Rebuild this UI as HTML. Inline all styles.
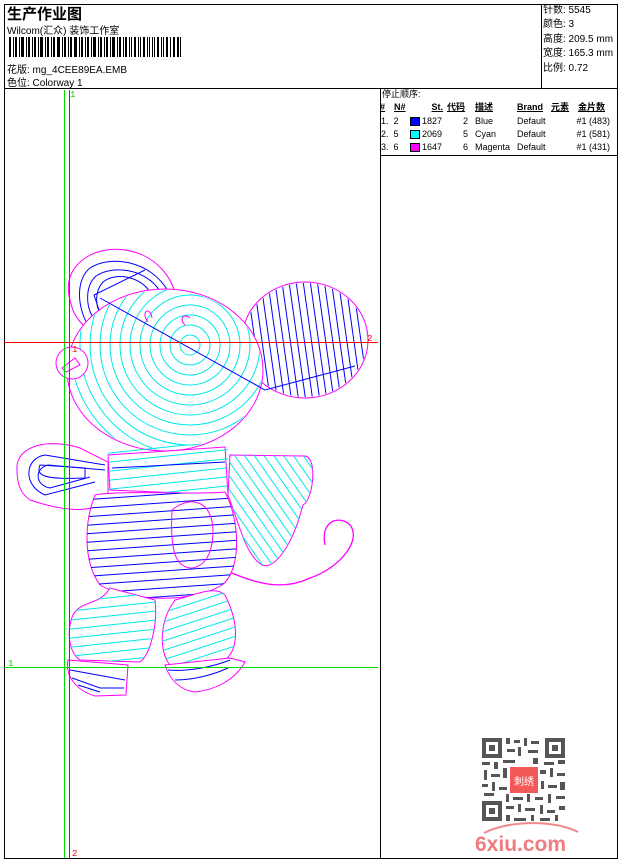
<!DOCTYPE html>
<html><head><meta charset="utf-8"><style>
body{margin:0;width:620px;height:860px;background:#fff;position:relative;overflow:hidden;font-family:"Liberation Sans","Noto Sans CJK SC",sans-serif;color:#000}
.a{position:absolute;white-space:nowrap}
.s{font-size:10px}
.t{position:absolute;font-size:9px;line-height:11px;white-space:nowrap}
.r{text-align:right}
.b{font-weight:bold;text-decoration:underline}
.sw{position:absolute;width:10px;height:9px;border:1px solid #000;box-sizing:border-box}
</style></head><body>
<svg class="a" style="left:0;top:0" width="620" height="860">
<defs>
<pattern id="hb" width="10" height="8.5" patternUnits="userSpaceOnUse" patternTransform="rotate(-4)"><line x1="0" y1="3" x2="10" y2="3" stroke="#0000ff" stroke-width="1"/></pattern>
<pattern id="hc" width="10" height="9" patternUnits="userSpaceOnUse" patternTransform="rotate(-6)"><line x1="0" y1="3" x2="10" y2="3" stroke="#00e8e8" stroke-width="1"/></pattern>
<pattern id="hc2" width="10" height="9" patternUnits="userSpaceOnUse" patternTransform="rotate(-18)"><line x1="0" y1="3" x2="10" y2="3" stroke="#00e8e8" stroke-width="1"/></pattern>
<pattern id="dc" width="8" height="10" patternUnits="userSpaceOnUse" patternTransform="rotate(-35)"><line x1="3" y1="0" x2="3" y2="10" stroke="#00e8e8" stroke-width="1"/></pattern>
<pattern id="vb" width="7" height="10" patternUnits="userSpaceOnUse" patternTransform="rotate(-8)"><line x1="2" y1="0" x2="2" y2="10" stroke="#0000ff" stroke-width="1"/></pattern>
<clipPath id="head"><ellipse cx="165" cy="370" rx="97" ry="80"/></clipPath>
<clipPath id="ear"><ellipse cx="305" cy="340" rx="62" ry="57"/></clipPath>
</defs>
<rect x="4.5" y="4.5" width="613" height="854" fill="none" stroke="#000"/>
<line x1="4" y1="88.5" x2="618" y2="88.5" stroke="#000"/>
<line x1="541.5" y1="4" x2="541.5" y2="88" stroke="#000"/>
<line x1="380.5" y1="88" x2="380.5" y2="858" stroke="#000"/>
<line x1="380" y1="155.5" x2="618" y2="155.5" stroke="#000"/>
<!-- left ear -->
<path d="M70,300 C60,265 95,245 125,250 C160,255 178,285 176,306 L120,330 C95,340 75,325 70,300Z" fill="#fff" stroke="#ff00ff"/>
<g fill="none" stroke="#0000ff"><path d="M168,291 C150,260 110,255 90,268 C75,280 77,310 90,328"/><path d="M160,291 C145,268 112,265 96,276 C84,287 86,310 95,320"/><path d="M150,292 C140,276 115,272 103,282 C94,292 96,306 100,313"/><path d="M145,270 L94,295 L100,313"/></g>
<!-- right ear -->
<ellipse cx="305" cy="340" rx="63" ry="58" fill="#fff" stroke="#ff00ff"/>
<rect x="240" y="280" width="130" height="120" fill="url(#vb)" clip-path="url(#ear)"/>
<!-- head -->
<ellipse cx="165" cy="370" rx="98" ry="81" fill="#fff" stroke="#ff00ff"/>
<g clip-path="url(#head)" fill="none" stroke="#00e8e8">
<circle cx="190" cy="345" r="10"/><circle cx="190" cy="345" r="20"/><circle cx="190" cy="345" r="30"/><circle cx="190" cy="345" r="40"/><circle cx="190" cy="345" r="50"/><circle cx="190" cy="345" r="60"/><circle cx="190" cy="345" r="70"/><circle cx="190" cy="345" r="80"/><circle cx="190" cy="345" r="90"/><circle cx="190" cy="345" r="100"/><circle cx="190" cy="345" r="110"/><circle cx="190" cy="345" r="120"/>
</g>
<path d="M100,298 L265,390 L355,366" fill="none" stroke="#0000ff"/>
<path d="M148,322 C140,312 150,305 152,318 M185,325 C178,318 185,313 190,318" fill="none" stroke="#ff00ff"/>
<circle cx="72" cy="363" r="16" fill="#fff" stroke="#ff00ff"/>
<path d="M62,368 L75,358 L80,365 L66,372Z" fill="none" stroke="#ff00ff"/>
<!-- collar -->
<path d="M108,455 L225,447 L228,495 L110,490Z" fill="#fff" stroke="#ff00ff"/>
<rect x="108" y="445" width="120" height="50" fill="url(#hc)"/>
<line x1="112" y1="468" x2="225" y2="462" stroke="#0000ff"/>
<!-- left hand -->
<path d="M17,470 C15,445 50,438 80,448 L108,462 L108,500 C90,515 60,510 30,500 C20,493 17,483 17,470Z" fill="#fff" stroke="#ff00ff"/>
<g fill="none" stroke="#0000ff"><path d="M105,465 L45,455 C25,458 22,485 45,495 L95,482"/><path d="M105,470 L48,465 C35,468 34,485 50,488 L90,477"/><path d="M85,468 L40,465 C36,475 42,480 85,478Z"/></g>
<!-- scarf -->
<path d="M230,455 L305,456 C318,458 313,500 303,505 L298,522 C290,545 275,570 262,565 C245,555 238,520 228,495Z" fill="#fff" stroke="#ff00ff"/>
<path d="M230,455 L305,456 C318,458 313,500 303,505 L298,522 C290,545 275,570 262,565 C245,555 238,520 228,495Z" fill="url(#dc)"/>
<!-- body -->
<path d="M95,495 C120,490 200,495 225,492 C240,520 242,570 222,585 C190,605 125,600 100,585 C82,560 85,520 95,495Z" fill="#fff" stroke="#ff00ff"/>
<path d="M95,495 C120,490 200,495 225,492 C240,520 242,570 222,585 C190,605 125,600 100,585 C82,560 85,520 95,495Z" fill="url(#hb)"/>
<path d="M172,510 C190,495 212,500 213,530 C213,560 200,568 190,568 C175,566 170,550 172,510Z" fill="none" stroke="#ff00ff"/>
<!-- tail -->
<path d="M232,573 C260,585 285,590 310,578 C340,568 362,540 350,525 C340,515 320,520 325,545" fill="none" stroke="#ff00ff" stroke-width="1.3"/>
<!-- legs -->
<path d="M110,588 L155,600 C158,625 150,655 140,662 L80,660 C65,650 68,620 75,612 C85,600 100,605 110,588Z" fill="#fff" stroke="#ff00ff"/>
<path d="M110,588 L155,600 C158,625 150,655 140,662 L80,660 C65,650 68,620 75,612 C85,600 100,605 110,588Z" fill="url(#hc)"/>
<path d="M175,600 C195,595 215,585 225,595 C240,625 238,650 225,660 L170,665 C158,650 160,620 175,600Z" fill="#fff" stroke="#ff00ff"/>
<path d="M175,600 C195,595 215,585 225,595 C240,625 238,650 225,660 L170,665 C158,650 160,620 175,600Z" fill="url(#hc2)"/>
<!-- feet -->
<path d="M68,660 L128,665 L126,695 L95,696 C75,690 65,675 68,660Z" fill="#fff" stroke="#ff00ff"/>
<g stroke="#0000ff" fill="none"><path d="M70,670 L125,680"/><path d="M72,678 L100,688 L124,688"/><path d="M78,685 L100,692"/></g>
<path d="M165,665 L230,658 L245,662 C235,680 215,690 195,692 C180,690 170,680 165,665Z" fill="#fff" stroke="#ff00ff"/>
<g stroke="#0000ff" fill="none"><path d="M168,670 C190,672 215,666 230,660"/><path d="M175,680 C195,680 215,674 228,668"/></g>
<!-- guides -->
<line x1="64.5" y1="90" x2="64.5" y2="858" stroke="#00dd00"/>
<line x1="69.5" y1="90" x2="69.5" y2="858" stroke="#ff0000"/>
<line x1="4" y1="342.5" x2="378" y2="342.5" stroke="#ff0000"/>
<line x1="4" y1="667.5" x2="378" y2="667.5" stroke="#00dd00"/>
<text x="70" y="97" font-size="9" fill="#00cc00" font-family="Liberation Mono">1</text>
<text x="367" y="341" font-size="9" fill="#ff0000" font-family="Liberation Mono">2</text>
<text x="72" y="352" font-size="9" fill="#ff0000" font-family="Liberation Mono">1</text>
<text x="8" y="666" font-size="9" fill="#00cc00" font-family="Liberation Mono">1</text>
<text x="72" y="856" font-size="9" fill="#ff0000" font-family="Liberation Mono">2</text>
<!-- barcode -->
<g fill="#000">
<rect x="9" y="37" width="2" height="20"/><rect x="13" y="37" width="1" height="20"/><rect x="15" y="37" width="2" height="20"/><rect x="19" y="37" width="1" height="20"/><rect x="21" y="37" width="3" height="20"/><rect x="26" y="37" width="1" height="20"/><rect x="28" y="37" width="2" height="20"/><rect x="32" y="37" width="1" height="20"/><rect x="34" y="37" width="2" height="20"/><rect x="38" y="37" width="1" height="20"/><rect x="40" y="37" width="3" height="20"/><rect x="45" y="37" width="1" height="20"/><rect x="47" y="37" width="2" height="20"/><rect x="51" y="37" width="1" height="20"/><rect x="53" y="37" width="2" height="20"/><rect x="57" y="37" width="3" height="20"/><rect x="62" y="37" width="1" height="20"/><rect x="64" y="37" width="2" height="20"/><rect x="68" y="37" width="1" height="20"/><rect x="70" y="37" width="2" height="20"/><rect x="74" y="37" width="3" height="20"/><rect x="79" y="37" width="1" height="20"/><rect x="81" y="37" width="2" height="20"/><rect x="85" y="37" width="1" height="20"/><rect x="87" y="37" width="2" height="20"/><rect x="91" y="37" width="1" height="20"/><rect x="93" y="37" width="3" height="20"/><rect x="98" y="37" width="1" height="20"/><rect x="100" y="37" width="2" height="20"/><rect x="104" y="37" width="1" height="20"/><rect x="106" y="37" width="2" height="20"/><rect x="110" y="37" width="1" height="20"/><rect x="112" y="37" width="3" height="20"/><rect x="117" y="37" width="1" height="20"/><rect x="119" y="37" width="2" height="20"/><rect x="123" y="37" width="1" height="20"/><rect x="125" y="37" width="2" height="20"/><rect x="129" y="37" width="1" height="20"/><rect x="131" y="37" width="1" height="20"/><rect x="134" y="37" width="2" height="20"/><rect x="138" y="37" width="1" height="20"/><rect x="140" y="37" width="1" height="20"/><rect x="143" y="37" width="2" height="20"/><rect x="147" y="37" width="1" height="20"/><rect x="149" y="37" width="1" height="20"/><rect x="152" y="37" width="1" height="20"/><rect x="154" y="37" width="1" height="20"/><rect x="157" y="37" width="2" height="20"/><rect x="161" y="37" width="1" height="20"/><rect x="163" y="37" width="1" height="20"/><rect x="166" y="37" width="2" height="20"/><rect x="170" y="37" width="1" height="20"/><rect x="173" y="37" width="2" height="20"/><rect x="177" y="37" width="2" height="20"/><rect x="180" y="37" width="1" height="20"/>
</g>
<!-- QR -->
<g fill="#555">
<path d="M482,738h20v20h-20zM486,742v12h12v-12z" fill-rule="evenodd"/><rect x="489" y="745" width="6" height="6"/>
<path d="M545,738h20v20h-20zM549,742v12h12v-12z" fill-rule="evenodd"/><rect x="552" y="745" width="6" height="6"/>
<path d="M482,801h20v20h-20zM486,805v12h12v-12z" fill-rule="evenodd"/><rect x="489" y="808" width="6" height="6"/>
<rect x="506" y="738" width="4" height="6"/><rect x="514" y="740" width="6" height="3"/><rect x="524" y="738" width="3" height="8"/><rect x="531" y="741" width="8" height="3"/><rect x="507" y="749" width="8" height="3"/><rect x="518" y="747" width="3" height="9"/><rect x="528" y="750" width="10" height="3"/><rect x="482" y="762" width="8" height="3"/><rect x="494" y="762" width="4" height="7"/><rect x="503" y="760" width="12" height="3"/><rect x="533" y="758" width="5" height="6"/><rect x="544" y="762" width="10" height="3"/><rect x="558" y="760" width="7" height="4"/><rect x="484" y="770" width="3" height="10"/><rect x="491" y="774" width="9" height="3"/><rect x="503" y="768" width="4" height="10"/><rect x="540" y="770" width="6" height="4"/><rect x="550" y="768" width="3" height="9"/><rect x="557" y="773" width="8" height="3"/><rect x="482" y="784" width="6" height="3"/><rect x="492" y="782" width="3" height="9"/><rect x="499" y="787" width="8" height="3"/><rect x="541" y="781" width="3" height="8"/><rect x="548" y="785" width="9" height="3"/><rect x="560" y="782" width="5" height="8"/><rect x="484" y="793" width="10" height="3"/><rect x="506" y="794" width="3" height="8"/><rect x="513" y="797" width="10" height="3"/><rect x="527" y="794" width="3" height="8"/><rect x="535" y="797" width="8" height="3"/><rect x="548" y="794" width="3" height="9"/><rect x="556" y="796" width="9" height="3"/><rect x="506" y="806" width="8" height="3"/><rect x="518" y="804" width="3" height="8"/><rect x="525" y="808" width="10" height="3"/><rect x="540" y="805" width="3" height="9"/><rect x="547" y="810" width="8" height="3"/><rect x="559" y="806" width="6" height="4"/><rect x="506" y="815" width="4" height="6"/><rect x="514" y="818" width="12" height="3"/><rect x="531" y="815" width="3" height="6"/><rect x="540" y="818" width="10" height="3"/><rect x="555" y="815" width="3" height="6"/>
</g>
<rect x="510" y="767" width="28" height="26" fill="#f25a5a"/>
<text x="524" y="785" font-size="10" fill="#fff" text-anchor="middle" font-family="Liberation Sans,Noto Sans CJK SC,sans-serif">刺绣</text>
<path d="M484,833 C510,820 555,820 578,832" fill="none" stroke="#f08a8a" stroke-width="2"/>
<text x="475" y="851" font-size="21" font-weight="bold" fill="#f07b80" font-family="Liberation Sans,sans-serif">6xiu.com</text>
</svg>
<div class="a" style="left:7px;top:3px;font-size:15px;font-weight:bold;font-family:'Noto Sans CJK SC',sans-serif">生产作业图</div>
<div class="a s" style="left:7px;top:22px">Wilcom(汇众) 装饰工作室</div>
<div class="a s" style="left:7px;top:61px">花版: mg_4CEE89EA.EMB</div>
<div class="a s" style="left:7px;top:74px">色位: Colorway 1</div>
<div class="a s" style="left:543px;top:4px;line-height:14.4px">针数: 5545<br>颜色: 3<br>高度: 209.5 mm<br>宽度: 165.3 mm<br>比例: 0.72</div>
<div class="t" style="left:382px;top:89px">停止顺序:</div>
<div class="t b" style="left:380px;top:102px">#</div>
<div class="t b" style="left:394px;top:102px">N#</div>
<div class="t b r" style="left:420px;width:23px;top:102px">St.</div>
<div class="t b" style="left:447px;top:102px">代码</div>
<div class="t b" style="left:475px;top:102px">描述</div>
<div class="t b" style="left:517px;top:102px">Brand</div>
<div class="t b" style="left:551px;top:102px">元素</div>
<div class="t b" style="left:578px;top:102px">金片数</div>

<div class="t" style="left:381px;top:116px">1.&nbsp; 2</div><div class="sw" style="left:410px;top:117px;background:#0000ff"></div><div class="t" style="left:422px;top:116px">1827</div><div class="t r" style="left:450px;width:18px;top:116px">2</div><div class="t" style="left:475px;top:116px">Blue</div><div class="t" style="left:517px;top:116px">Default</div><div class="t r" style="left:560px;width:50px;top:116px">#1 (483)</div>
<div class="t" style="left:381px;top:129px">2.&nbsp; 5</div><div class="sw" style="left:410px;top:130px;background:#00ffff"></div><div class="t" style="left:422px;top:129px">2069</div><div class="t r" style="left:450px;width:18px;top:129px">5</div><div class="t" style="left:475px;top:129px">Cyan</div><div class="t" style="left:517px;top:129px">Default</div><div class="t r" style="left:560px;width:50px;top:129px">#1 (581)</div>
<div class="t" style="left:381px;top:142px">3.&nbsp; 6</div><div class="sw" style="left:410px;top:143px;background:#ff00ff"></div><div class="t" style="left:422px;top:142px">1647</div><div class="t r" style="left:450px;width:18px;top:142px">6</div><div class="t" style="left:475px;top:142px">Magenta</div><div class="t" style="left:517px;top:142px">Default</div><div class="t r" style="left:560px;width:50px;top:142px">#1 (431)</div>
</body></html>
